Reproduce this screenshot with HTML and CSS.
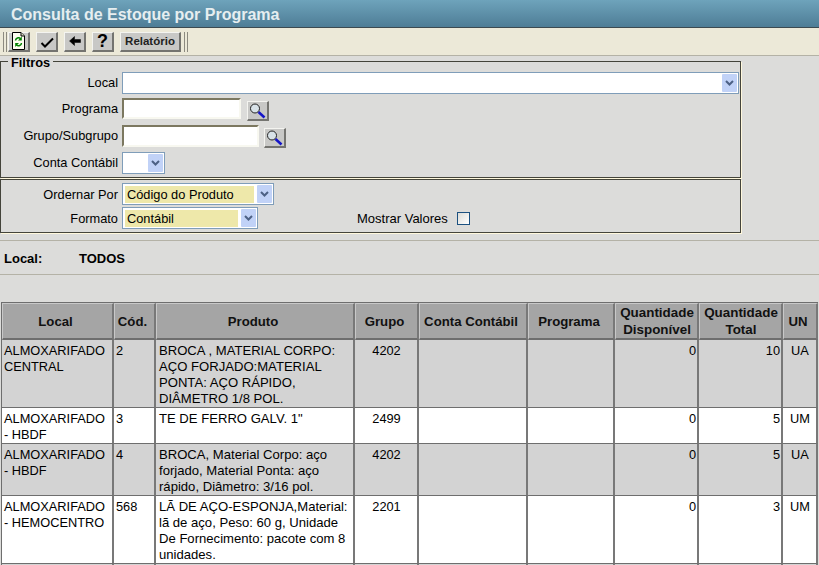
FILE: index.html
```html
<!DOCTYPE html>
<html lang="pt-BR">

<head>
    <meta charset="UTF-8">
    <title>Consulta de Estoque por Programa</title>
    <link rel="stylesheet" href="styles.css">
</head>

<body>
    <div class="titulo">Consulta de Estoque por Programa</div>

    <div class="toolbar">
        <span class="grip grip-ini"></span>
        <button class="tb-btn">
            <svg width="15" height="18" viewBox="0 0 15 18">
                <path d="M1.500 .5H10L13.500 4V17.500H1.500Z" fill="#fdfdf0" stroke="#000" />
                <path d="M10 .5V4H13.500" fill="#d8d8c0" stroke="#000" />
                <path d="M4.500 8.500A3 3 0 0 1 9.500 6.500M10.500 11A3 3 0 0 1 5.500 13" fill="none" stroke="#008000" stroke-width="1.500" />
                <path d="M10.800 4.500V8.500H7ZM4.200 15V11H8Z" fill="#008000" />
            </svg>
        </button>
        <button class="tb-btn">
            <svg width="16" height="16" viewBox="0 0 16 16">
                <path d="M2.500 10L6 13.500L14 5.500" fill="none" stroke="#000" stroke-width="2" />
            </svg>
        </button>
        <button class="tb-btn">
            <svg width="14" height="12" viewBox="0 0 14 12">
                <path d="M1.500 6L6.500 1.500V4.500H12.500V7.500H6.500V10.500Z" fill="#000" stroke="#000" stroke-width=".5" />
            </svg>
        </button>
        <button class="tb-btn tb-help">?</button>
        <button class="tb-btn tb-text">Relatório</button>
        <span class="grip"></span>
    </div>

    <fieldset class="filtros">
        <legend>Filtros</legend>
        <div class="linha linha-local">
            <label class="rotulo rotulo-alto">Local</label>
            <div class="combo combo-local"><span class="combo-valor"></span><span class="seta"><svg width="9" height="6" viewBox="0 0 9 6"><path d="M1 1L4.500 4.500L8 1" fill="none" stroke="#4d6185" stroke-width="2" /></svg></span></div>
        </div>
        <div class="linha linha-busca">
            <label class="rotulo rotulo-programa">Programa</label>
            <input class="campo campo-programa" type="text">
            <button class="lupa">
                <svg width="19" height="18" viewBox="0 0 19 18">
                    <circle cx="7" cy="6.500" r="4.500" fill="#d8e2e8" stroke="#222" />
                    <path d="M10.500 10L16.500 15.500" stroke="#1414c8" stroke-width="2.500" />
                </svg>
            </button>
        </div>
        <div class="linha linha-busca">
            <label class="rotulo rotulo-grupo">Grupo/Subgrupo</label>
            <input class="campo campo-grupo" type="text">
            <button class="lupa">
                <svg width="19" height="18" viewBox="0 0 19 18">
                    <circle cx="7" cy="6.500" r="4.500" fill="#d8e2e8" stroke="#222" />
                    <path d="M10.500 10L16.500 15.500" stroke="#1414c8" stroke-width="2.500" />
                </svg>
            </button>
        </div>
        <div class="linha linha-conta">
            <label class="rotulo rotulo-alto">Conta Contábil</label>
            <div class="combo combo-conta"><span class="combo-valor"></span><span class="seta"><svg width="9" height="6" viewBox="0 0 9 6"><path d="M1 1L4.500 4.500L8 1" fill="none" stroke="#4d6185" stroke-width="2" /></svg></span></div>
        </div>
    </fieldset>

    <fieldset class="ordem">
        <div class="linha linha-ordem">
            <label class="rotulo">Ordernar Por</label>
            <div class="combo combo-ordem"><span class="combo-valor amarelo">Código do Produto</span><span class="seta"><svg width="9" height="6" viewBox="0 0 9 6"><path d="M1 1L4.500 4.500L8 1" fill="none" stroke="#4d6185" stroke-width="2" /></svg></span></div>
        </div>
        <div class="linha linha-formato">
            <label class="rotulo">Formato</label>
            <div class="combo combo-formato"><span class="combo-valor amarelo">Contábil</span><span class="seta"><svg width="9" height="6" viewBox="0 0 9 6"><path d="M1 1L4.500 4.500L8 1" fill="none" stroke="#4d6185" stroke-width="2" /></svg></span></div>
            <span class="mostrar">Mostrar Valores</span>
            <span class="check"></span>
        </div>
    </fieldset>

    <div class="resumo">
        <b class="resumo-label">Local:</b>
        <b>TODOS</b>
    </div>

    <table class="grade">
        <colgroup>
            <col class="c-local">
            <col class="c-cod">
            <col class="c-prod">
            <col class="c-grupo">
            <col class="c-conta">
            <col class="c-prog">
            <col class="c-qtd">
            <col class="c-qtd">
            <col class="c-un">
        </colgroup>
        <thead>
            <tr>
                <th>Local</th>
                <th>Cód.</th>
                <th>Produto</th>
                <th>Grupo</th>
                <th>Conta Contábil</th>
                <th>Programa</th>
                <th class="th-qtd">Quantidade Disponível</th>
                <th class="th-qtd">Quantidade Total</th>
                <th>UN</th>
            </tr>
        </thead>
        <tbody>
            <tr class="par">
                <td>ALMOXARIFADO CENTRAL</td>
                <td>2</td>
                <td class="prod">BROCA , MATERIAL CORPO: AÇO FORJADO:MATERIAL PONTA: AÇO RÁPIDO, DIÂMETRO 1/8 POL.</td>
                <td class="centro">4202</td>
                <td></td>
                <td></td>
                <td class="num">0</td>
                <td class="num">10</td>
                <td class="centro">UA</td>
            </tr>
            <tr>
                <td>ALMOXARIFADO - HBDF</td>
                <td>3</td>
                <td class="prod">TE DE FERRO GALV. 1"</td>
                <td class="centro">2499</td>
                <td></td>
                <td></td>
                <td class="num">0</td>
                <td class="num">5</td>
                <td class="centro">UM</td>
            </tr>
            <tr class="par">
                <td>ALMOXARIFADO - HBDF</td>
                <td>4</td>
                <td class="prod">BROCA, Material Corpo: aço forjado, Material Ponta: aço rápido, Diâmetro: 3/16 pol.</td>
                <td class="centro">4202</td>
                <td></td>
                <td></td>
                <td class="num">0</td>
                <td class="num">5</td>
                <td class="centro">UA</td>
            </tr>
            <tr>
                <td>ALMOXARIFADO - HEMOCENTRO</td>
                <td>568</td>
                <td class="prod">LÃ DE AÇO-ESPONJA,Material: lã de aço, Peso: 60 g, Unidade De Fornecimento: pacote com 8 unidades.</td>
                <td class="centro">2201</td>
                <td></td>
                <td></td>
                <td class="num">0</td>
                <td class="num">3</td>
                <td class="centro">UM</td>
            </tr>
            <tr class="par vazia">
                <td></td>
                <td></td>
                <td></td>
                <td></td>
                <td></td>
                <td></td>
                <td></td>
                <td></td>
                <td></td>
            </tr>
        </tbody>
    </table>
</body>

</html>
```

FILE: styles.css
```css
html,
body {
    height: 565px;
    overflow: hidden;
}

body {
    margin: 0;
    background: #dcdcda;
    color: #000;
    font-family: 'Liberation Sans', Arial, sans-serif;
    font-size: 12.8px;
}

.titulo {
    height: 28px;
    box-sizing: border-box;
    padding: 6px 0 0 11px;
    background: linear-gradient(#6ea3bb, #4e7d96);
    border-bottom: 1px solid #3c4a50;
    color: #e6eef0;
    font-size: 16px;
    font-weight: 700;
}

.toolbar {
    height: 28px;
    box-sizing: border-box;
    display: flex;
    align-items: center;
    padding-left: 3px;
    background: #ece9d8;
    border-bottom: 1px solid #b4b2a6;
}

.grip {
    width: 2px;
    height: 20px;
    border-left: 1px solid #8c8a80;
    border-right: 1px solid #8c8a80;
}

.grip-ini {
    margin-right: 1px;
}

.tb-btn {
    width: 22px;
    height: 20px;
    margin-right: 6px;
    padding: 0;
    display: flex;
    align-items: center;
    justify-content: center;
    background: #c8c8c6;
    border-style: solid;
    border-width: 1px 2px 2px 1px;
    border-color: #f4f4f0 #747470 #747470 #f4f4f0;
    font-family: 'Liberation Sans', Arial, sans-serif;
}

.tb-help {
    font-size: 18px;
    font-weight: 700;
}

.tb-text {
    width: 61px;
    margin-right: 3px;
    font-size: 11.500px;
    font-weight: 700;
    color: #222;
}

fieldset {
    width: 741px;
    box-sizing: border-box;
    margin: 0;
    padding: 0;
    border: 1px solid #44443a;
    box-shadow: 1px 1px 0 #fff8dc;
}

legend {
    height: 10px;
    margin-left: 7px;
    padding: 0 3px;
    font-weight: 700;
    line-height: 14px;
}

.filtros {
    height: 122px;
}

.ordem {
    height: 54px;
    margin-top: 1px;
}

.linha {
    display: flex;
    align-items: center;
}

.rotulo {
    width: 117px;
    margin-right: 4px;
    flex: none;
    text-align: right;
}

.rotulo-alto {
    padding-bottom: 2px;
}

.linha-local {
    height: 22px;
    margin-top: 6px;
}

.linha-busca {
    height: 23px;
    margin-top: 4px;
    align-items: flex-start;
}

.rotulo-programa {
    line-height: 21px;
}

.rotulo-grupo {
    line-height: 22px;
}

.linha-conta {
    height: 22px;
    margin-top: 4px;
}

.linha-ordem {
    height: 22px;
    margin-top: 3px;
}

.linha-formato {
    height: 22px;
    margin-top: 2px;
}

.combo {
    height: 22px;
    box-sizing: border-box;
    display: flex;
    align-items: center;
    padding: 1px;
    background: #fff;
    border: 1px solid #7f9db9;
}

.combo-valor {
    flex: 1;
    height: 17px;
    margin: 0 3px 0 1px;
    padding-left: 2px;
    line-height: 17px;
}

.amarelo {
    background: #eee8aa;
}

.seta {
    width: 15px;
    height: 18px;
    display: flex;
    align-items: center;
    justify-content: center;
    background: #c1d2f7;
    border-radius: 1px;
}

.combo-local {
    width: 617px;
}

.combo-conta {
    width: 43px;
}

.combo-ordem {
    width: 152px;
}

.combo-formato {
    width: 136px;
}

.campo {
    box-sizing: border-box;
    padding: 0;
    background: #fff;
    border: 2px solid;
    border-color: #7c7860 #f8f8f0 #f8f8f0 #7c7860;
}

.campo-programa {
    width: 119px;
    height: 21px;
    margin-right: 1px;
}

.campo-grupo {
    width: 137px;
    height: 22px;
}

.lupa {
    width: 22px;
    height: 20px;
    margin: 3px 0 0 5px;
    padding: 0;
    display: flex;
    align-items: center;
    justify-content: center;
    background: #c8c8c6;
    border-style: solid;
    border-width: 1px 2px 2px 1px;
    border-color: #f4f4f0 #747470 #747470 #f4f4f0;
}

.mostrar {
    margin-left: 99px;
    font-size: 13px;
}

.check {
    width: 11px;
    height: 11px;
    margin-left: 9px;
    background: linear-gradient(135deg, #dcdcd7, #fff);
    border: 1px solid #1c5180;
}

.resumo {
    height: 35px;
    box-sizing: border-box;
    margin-top: 7px;
    display: flex;
    align-items: center;
    padding: 1px 0 0 4px;
    border-top: 1px solid #b4b2a6;
    border-bottom: 1px solid #b4b2a6;
    font-size: 13px;
}

.resumo-label {
    width: 75px;
}

.grade {
    width: 817px;
    margin: 27px 0 0 1px;
    border-collapse: separate;
    border-spacing: 0;
    table-layout: fixed;
    background: #fff;
    border-top: 1px solid #6e6e6e;
    border-left: 1px solid #6e6e6e;
}

.grade th,
.grade td {
    padding: 3px 1px 0 2px;
    border-right: 2px solid #787878;
    border-bottom: 1px solid #6e6e6e;
    line-height: 16px;
    vertical-align: top;
}

.grade th {
    padding: 0 5px 0 1px;
    background: #a5a5a5;
    color: #111;
    font-size: 13.200px;
    line-height: 17px;
    vertical-align: middle;
    text-align: center;
    border-left: 1px solid #c8c8c8;
    border-top: 1px solid #c8c8c8;
    border-bottom-width: 2px;
}

.grade .th-qtd {
    padding: 0 1px 0 2px;
    font-size: 13.400px;
}

.par td {
    background: #d3d3d3;
}

.grade .prod {
    padding-left: 3px;
    font-size: 13.100px;
}

.centro {
    text-align: center;
}

.num {
    text-align: right;
}

.vazia td {
    height: 16px;
}

.c-local {
    width: 112px;
}

.c-cod {
    width: 42px;
}

.c-prod {
    width: 199px;
}

.c-grupo {
    width: 64px;
}

.c-conta {
    width: 109px;
}

.c-prog {
    width: 87px;
}

.c-qtd {
    width: 84px;
}

.c-un {
    width: 35px;
}
```
